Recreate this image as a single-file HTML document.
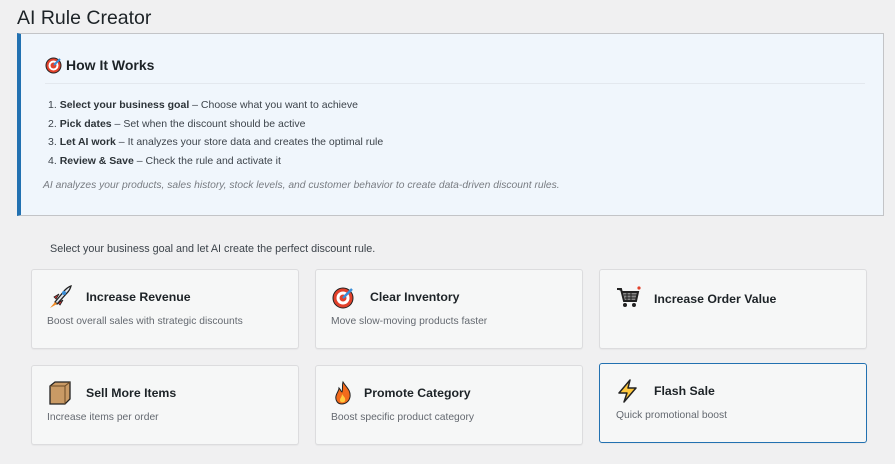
<!DOCTYPE html>
<html><head><style>
body{margin:0;background:#f0f0f1;font-family:"Liberation Sans",sans-serif;color:#1d2327;width:895px;height:464px;overflow:hidden;position:relative}
h1{position:absolute;left:17px;top:7px;margin:0;font-size:19.5px;font-weight:400;color:#1d2327}
.info{position:absolute;left:17px;top:33px;width:862px;height:181px;background:#f0f6fc;border:1px solid #c3c4c7;border-left:4px solid #2271b1}
.info h2{position:absolute;left:26px;top:23px;margin:0;font-size:14px;font-weight:700}
.hr{position:absolute;left:24px;right:18px;top:49px;border-top:1px solid #e3e8ee}
.info ol{position:absolute;left:27px;top:64px;margin:0;padding:0;list-style:none;font-size:10.5px;color:#3c434a}
.info li{height:18.5px;line-height:14px}
.info li b{font-weight:700;color:#2c3338}
.note{position:absolute;left:22px;top:146px;font-size:10.3px;font-style:italic;color:#787c82}
.lead{position:absolute;left:50px;top:243px;font-size:10.8px;color:#3c434a}
.card{position:absolute;width:266px;height:78px;background:#f6f7f7;border:1px solid #dcdcde;border-radius:3px;box-shadow:0 1px 1px rgba(0,0,0,.04)}
.card .t{position:absolute;left:54px;top:20px;font-size:12.3px;font-weight:700;color:#1d2327}
.card .d{position:absolute;left:15px;top:46px;font-size:10.3px;color:#646970}
.card svg{position:absolute;left:15px;top:14px}
.sel{border-color:#2271b1;background:#f6f7f7}
</style></head><body>
<h1>AI Rule Creator</h1>
<div class="info">
<svg style="position:absolute;left:24px;top:22px" width="18" height="18" viewBox="0 0 18 18"><circle cx="8.5" cy="9.5" r="7.5" fill="#e2412b" stroke="#222" stroke-width="1"/><circle cx="8.5" cy="9.5" r="5" fill="#fff"/><circle cx="8.5" cy="9.5" r="3" fill="#e2412b"/><path d="M9 9L15 3" stroke="#3b8fd8" stroke-width="2"/></svg>
<h2 style="left:45px">How It Works</h2>
<div class="hr"></div>
<ol>
<li>1. <b>Select your business goal</b> – Choose what you want to achieve</li>
<li>2. <b>Pick dates</b> – Set when the discount should be active</li>
<li>3. <b>Let AI work</b> – It analyzes your store data and creates the optimal rule</li>
<li>4. <b>Review &amp; Save</b> – Check the rule and activate it</li>
</ol>
<div class="note">AI analyzes your products, sales history, stock levels, and customer behavior to create data-driven discount rules.</div>
</div>
<div class="lead">Select your business goal and let AI create the perfect discount rule.</div>

<div class="card" style="left:31px;top:269px"><svg width="26" height="26" viewBox="0 0 26 26"><path d="M8 18L18 6Q21 3 24 2Q23 6 20 9L10 20Z" fill="#dfe6ee" stroke="#222" stroke-width="1.3"/><path d="M7 13L12 10L9 15Z M13 21L16 16L11 19Z" fill="#d33" stroke="#222" stroke-width="0.8"/><path d="M8 18L3 24L10 20Z" fill="#f08a24"/><circle cx="17" cy="9" r="2" fill="#3b8fd8"/></svg><div class="t">Increase Revenue</div><div class="d">Boost overall sales with strategic discounts</div></div>
<div class="card" style="left:315px;top:269px"><svg width="26" height="26" viewBox="0 0 26 26"><circle cx="12" cy="14" r="10" fill="#e2412b" stroke="#222"/><circle cx="12" cy="14" r="6.5" fill="#fff"/><circle cx="12" cy="14" r="3.5" fill="#e2412b"/><path d="M12 14L21 5" stroke="#3b8fd8" stroke-width="2.5"/></svg><div class="t">Clear Inventory</div><div class="d">Move slow-moving products faster</div></div>
<div class="card" style="left:599px;top:269px"><svg width="26" height="26" viewBox="0 0 26 26"><path d="M2 5H6L9 17H21L23 8H7" fill="#888" stroke="#222" stroke-width="2"/><path d="M9 11H22M10 14H21M12 8V17M16 8V17" stroke="#222" stroke-width="1"/><circle cx="10" cy="21" r="2" fill="#222"/><circle cx="19" cy="21" r="2" fill="#222"/><circle cx="24" cy="4" r="1.6" fill="#e2412b"/></svg><div class="t" style="top:22px">Increase Order Value</div></div>
<div class="card" style="left:31px;top:365px"><svg width="26" height="26" viewBox="0 0 26 26"><path d="M3 6L8 2H23V19L18 24H3Z" fill="#c99a65" stroke="#222" stroke-width="1.3"/><path d="M3 6H18V24M18 6L23 2" stroke="#6b4a25" fill="none"/></svg><div class="t">Sell More Items</div><div class="d">Increase items per order</div></div>
<div class="card" style="left:315px;top:365px"><svg width="26" height="26" viewBox="0 0 26 26"><path d="M12 2C15 7 20 10 19 17C18 22 14 24 11 24C7 24 4 21 5 16C6 12 8 11 8 8C10 10 10 12 11 12C12 9 11 5 12 2Z" fill="#f26a1b" stroke="#222"/><path d="M11 14C13 17 15 18 14 21C13 23 9 23 9 20C9 18 11 17 11 14Z" fill="#ffc83d"/></svg><div class="t" style="left:48px">Promote Category</div><div class="d">Boost specific product category</div></div>
<div class="card sel" style="left:599px;top:363px"><svg width="26" height="26" viewBox="0 0 26 26"><path d="M15 2L4 15H12L9 24L21 10H13Z" fill="#ffc83d" stroke="#222" stroke-width="1.5" stroke-linejoin="round"/></svg><div class="t" style="top:20px">Flash Sale</div><div class="d" style="left:16px">Quick promotional boost</div></div>
</body></html>
